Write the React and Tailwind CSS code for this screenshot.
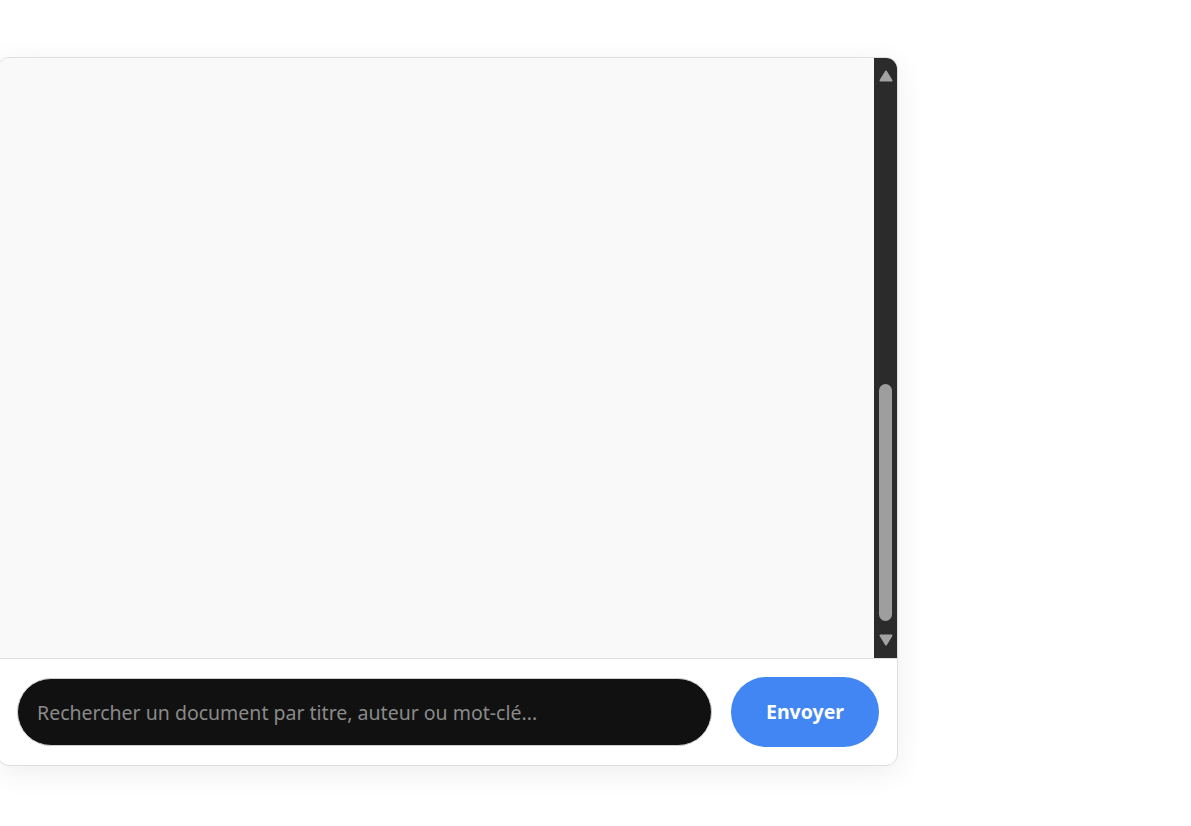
import { useState } from 'react';

function ScrollArrow({ down }) {
  return (
    <svg width="14" height="12" viewBox="0 0 14 12" className="shrink-0">
      <path
        d={down ? 'M1.5 1.5 L12.5 1.5 L7 10.5 Z' : 'M1.5 10.5 L12.5 10.5 L7 1.5 Z'}
        fill="#a3a3a3"
        stroke="#a3a3a3"
        strokeWidth="2"
        strokeLinejoin="round"
      />
    </svg>
  );
}

export default function App() {
  const [query, setQuery] = useState('');

  return (
    <div className="min-h-screen bg-white pt-[57px]" style={{ fontFamily: '"Noto Sans", "Open Sans", sans-serif' }}>
      <div className="-ml-[3px] w-[901px] rounded-xl border border-[#dedede] bg-white shadow-[0_6px_30px_rgba(0,0,0,0.07)] overflow-hidden flex flex-col">
        <div className="h-[600px] flex bg-[#f9f9f9]">
          <div className="flex-1" />
          <div className="w-[23px] bg-[#2b2b2b] flex flex-col items-center pt-[12px] pb-[12px]">
            <ScrollArrow />
            <div className="flex-1 w-full flex flex-col justify-end items-center pb-[13px]">
              <div className="w-[13px] h-[237px] rounded-full bg-[#9e9e9e]" />
            </div>
            <ScrollArrow down />
          </div>
        </div>
        <div className="border-t border-[#dedede] flex items-center gap-[19px] pl-[19px] pr-[18px] py-[18px]">
          <input
            value={query}
            onChange={(e) => setQuery(e.target.value)}
            placeholder="Rechercher un document par titre, auteur ou mot-clé..."
            className="flex-1 h-[68px] rounded-full bg-[#111111] border border-[#cfcfcf] px-[19px] text-[19.5px] text-white placeholder:text-[#8a8a8a] outline-none"
          />
          <button className="w-[148px] h-[70px] rounded-full bg-[#4286f4] text-white text-[19.5px] font-bold">
            Envoyer
          </button>
        </div>
      </div>
    </div>
  );
}
